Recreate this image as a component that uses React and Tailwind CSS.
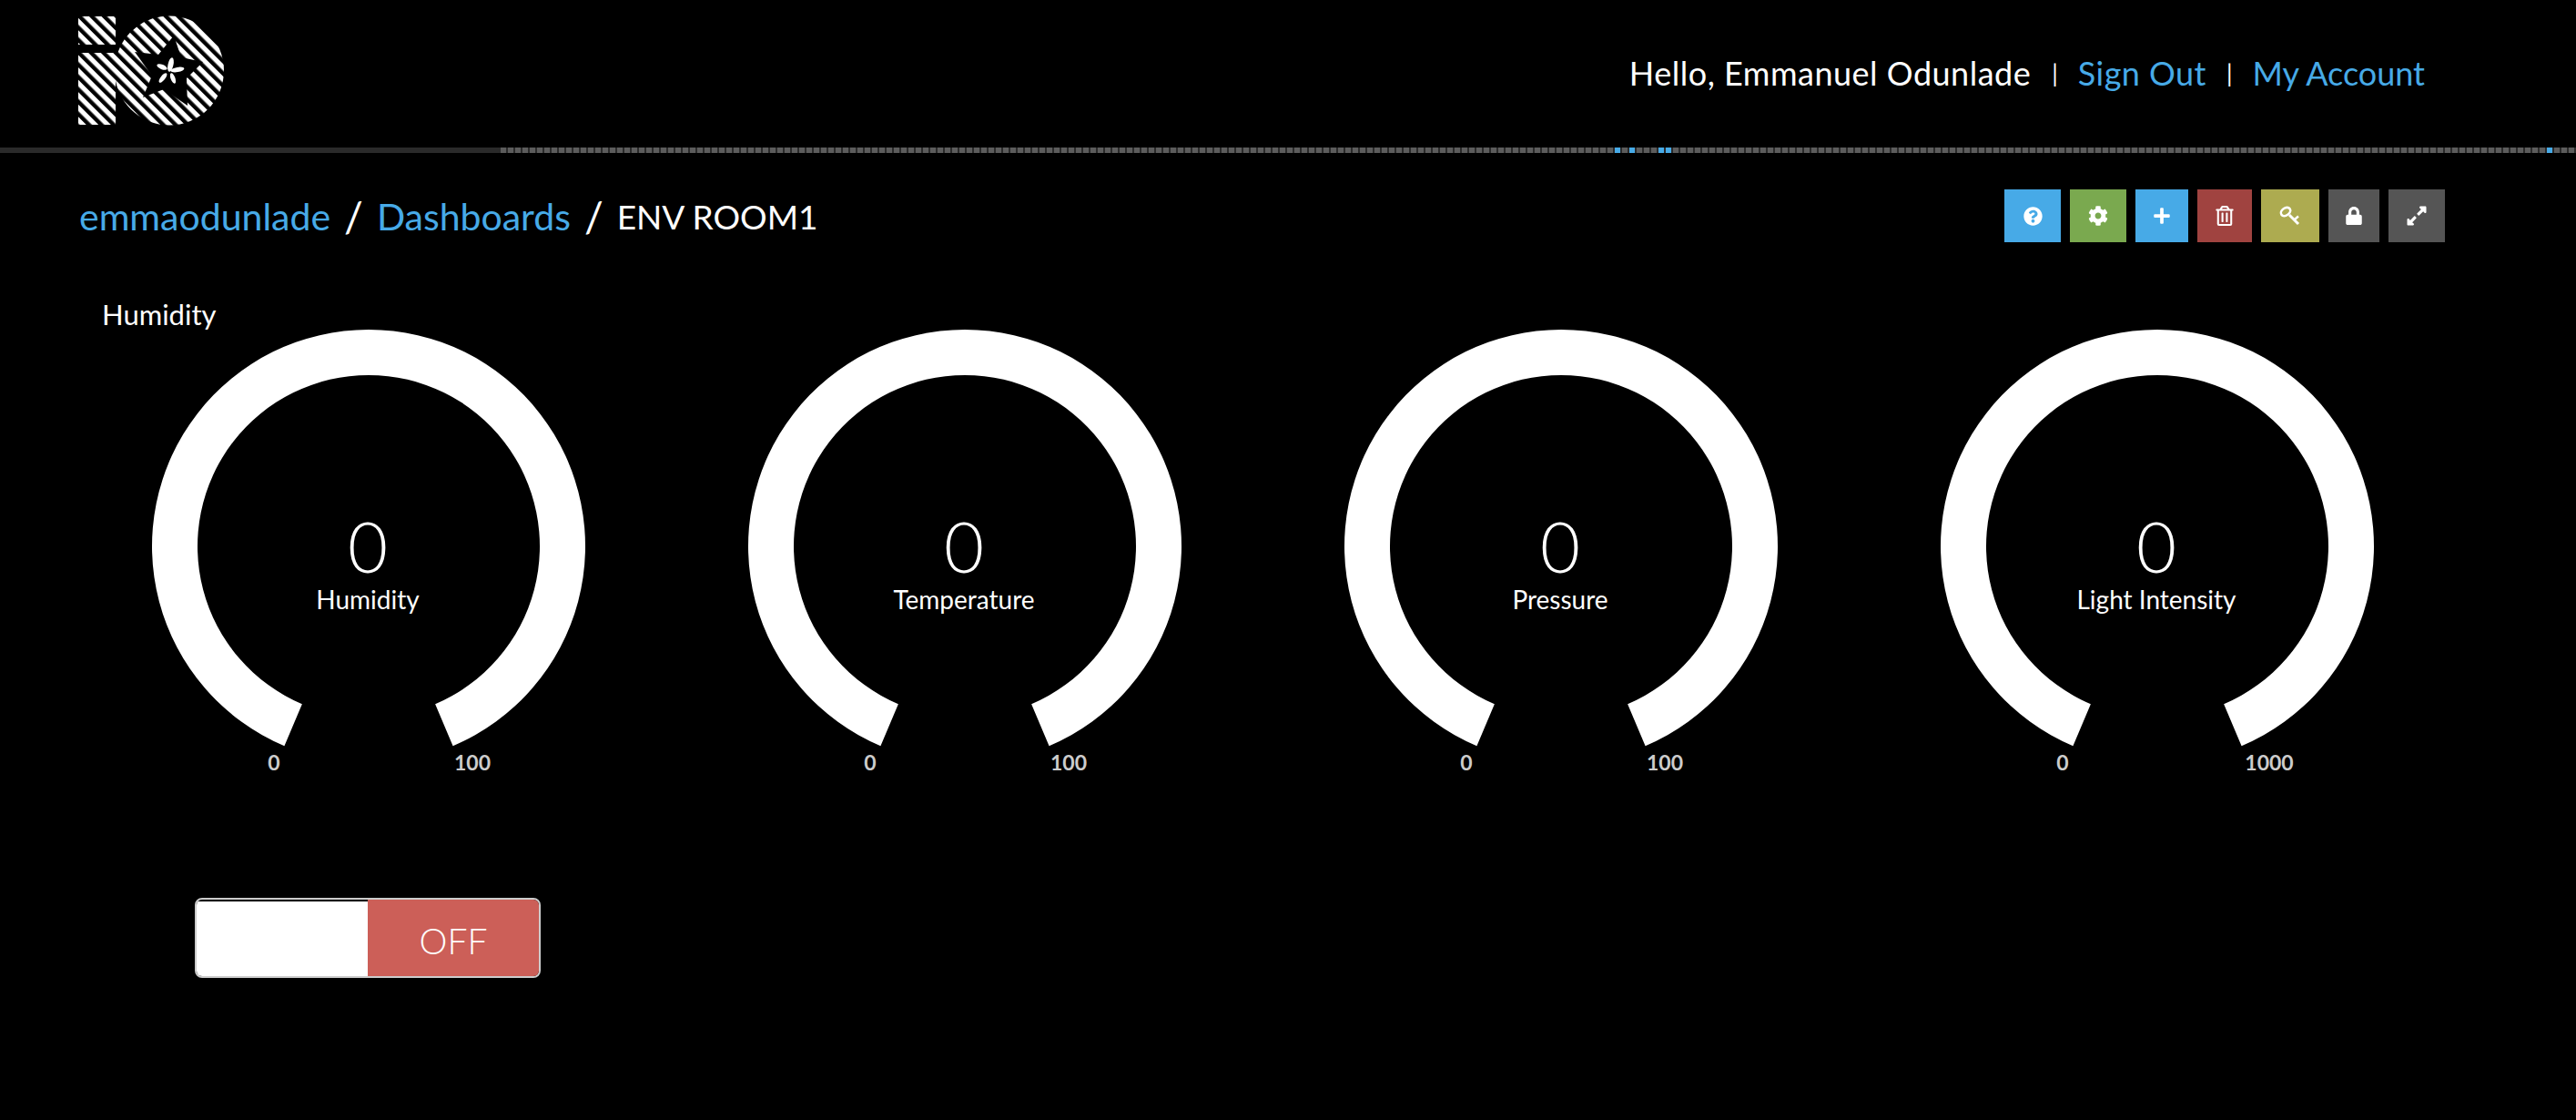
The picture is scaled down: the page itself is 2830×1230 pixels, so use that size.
import React from 'react';
import { FaQuestionCircle, FaCog, FaPlus, FaRegTrashAlt, FaLock, FaExpandAlt } from 'react-icons/fa';

const FONT = "font-['Lato','Open_Sans',sans-serif]";

const gauges = [
  { title: 'Humidity', label: 'Humidity', max: '100', maxX: 114, showTitle: true },
  { title: 'Temperature', label: 'Temperature', max: '100', maxX: 114 },
  { title: 'Pressure', label: 'Pressure', max: '100', maxX: 114 },
  { title: 'Light Intensity', label: 'Light Intensity', max: '1000', maxX: 123 },
];

const blueCells = [153, 155, 159, 160, 281];
const cells = Array.from({ length: 285 }, (_, i) => i);

const arcPath = (cx, cy) => {
  const sin = 0.389;
  const cos = 0.921;
  const R = 238;
  const r = 188;
  return [
    `M ${cx - R * sin} ${cy + R * cos}`,
    `A ${R} ${R} 0 1 1 ${cx + R * sin} ${cy + R * cos}`,
    `L ${cx + r * sin} ${cy + r * cos}`,
    `A ${r} ${r} 0 1 0 ${cx - r * sin} ${cy + r * cos}`,
    'Z',
  ].join(' ');
};

const Logo = () => (
  <svg width="162" height="122" viewBox="85 17 162 122" className="block">
    <defs>
      <pattern id="stripes" width="9.6" height="9.6" patternUnits="userSpaceOnUse" patternTransform="rotate(45 86 18)">
        <rect width="9.6" height="5.2" x="0" y="0" fill="#fff" />
      </pattern>
      <clipPath id="ioShape">
        <rect x="86" y="18" width="41" height="31" />
        <rect x="86" y="58" width="41" height="79" />
        <rect x="127" y="58" width="12" height="24" />
        <circle cx="186" cy="77.5" r="60" />
      </clipPath>
    </defs>
    <rect x="85" y="17" width="162" height="122" fill="url(#stripes)" clipPath="url(#ioShape)" />
    <polygon points="191,39 199,63 223,68 205,86 206,116 180,98 157,107 167,83 148,57 174,60" fill="#000" />
    <g fill="#fff">
      <ellipse cx="187.5" cy="71" rx="3" ry="8" transform="rotate(12 187.5 71)" />
      <ellipse cx="195" cy="76.5" rx="7.5" ry="2.6" transform="rotate(-10 195 76.5)" />
      <ellipse cx="190" cy="86" rx="2.5" ry="6" transform="rotate(-20 190 86)" />
      <ellipse cx="179" cy="85.5" rx="2.5" ry="6.5" transform="rotate(38 179 85.5)" />
      <ellipse cx="178" cy="73.5" rx="6" ry="2.6" transform="rotate(22 178 73.5)" />
    </g>
  </svg>
);

const KeyIcon = () => (
  <svg width="24" height="24" viewBox="0 0 24 24" fill="none" stroke="#fff">
    <ellipse cx="7" cy="7.5" rx="5.6" ry="4" strokeWidth="2.6" transform="rotate(-35 7 7.5)" />
    <path d="M11 11 L21 21" strokeWidth="3" />
    <path d="M17 16 L21 12.5" strokeWidth="2.4" />
  </svg>
);

const toolbar = [
  { w: 'w-[62px]', bg: 'bg-[#47aae7]', icon: <FaQuestionCircle size={21} /> },
  { w: 'w-[62px]', bg: 'bg-[#7aa94f]', icon: <FaCog size={22} /> },
  { w: 'w-[58px]', bg: 'bg-[#47aae7]', icon: <FaPlus size={20} /> },
  { w: 'w-[60px]', bg: 'bg-[#a04340]', icon: <FaRegTrashAlt size={22} /> },
  { w: 'w-[64px]', bg: 'bg-[#adab50]', icon: <KeyIcon /> },
  { w: 'w-[56px]', bg: 'bg-[#555555]', icon: <FaLock size={20} /> },
  { w: 'w-[62px]', bg: 'bg-[#555555]', icon: <FaExpandAlt size={24} /> },
];

const Gauge = ({ gauge }) => (
  <div className="relative w-[655px] h-[540px]">
    {gauge.showTitle && (
      <div className="absolute left-[35px] top-0 text-[31px] leading-[30px] text-white">{gauge.title}</div>
    )}
    <svg width="655" height="540" viewBox="0 0 655 540" className="block">
      <path d={arcPath(328, 270)} fill="#fff" />
      <text x="327" y="299" textAnchor="middle" fill="#fff" fontSize="76" fontWeight="300">0</text>
      <text x="327" y="339" textAnchor="middle" fill="#fff" fontSize="28">{gauge.label}</text>
      <text x="224" y="516" textAnchor="middle" fill="#cccccc" fontSize="23" fontWeight="700">0</text>
      <text x={328 + gauge.maxX} y="516" textAnchor="middle" fill="#cccccc" fontSize="23" fontWeight="700">{gauge.max}</text>
    </svg>
  </div>
);

const App = () => {
  return (
    <div className={`w-full h-[1230px] bg-black overflow-hidden text-white ${FONT}`}>
      <header className="h-[162px] flex justify-between pl-[85px] pr-[166px]">
        <div className="pt-[17px]">
          <Logo />
        </div>
        <nav className="flex items-center h-[160px] text-[36px] gap-[22px]">
          <span className="tracking-[0.5px] mr-[1px]">Hello, Emmanuel Odunlade</span>
          <span className="text-[26px]">|</span>
          <a className="text-[#47aae7] tracking-[0.45px]">Sign Out</a>
          <span className="text-[26px]">|</span>
          <a className="text-[#47aae7]">My Account</a>
        </nav>
      </header>

      <div className="h-[6px] flex bg-[#2a2a2a]">
        <div className="w-[550px] shrink-0" />
        {cells.map((i) => (
          <div key={i} className="w-[8px] shrink-0 pr-[2px]">
            <div className={blueCells.includes(i) ? 'h-full bg-[#47aae7]' : 'h-full bg-[#5c5c5c]'} />
          </div>
        ))}
      </div>

      <div className="flex justify-between pl-[87px] pr-[144px] pt-[40px]">
        <div className="flex items-center h-[58px] text-[41px] gap-[15px] pt-[2px]">
          <a className="text-[#47aae7]">emmaodunlade</a>
          <span className="text-[46px] leading-none">/</span>
          <a className="text-[#47aae7]">Dashboards</a>
          <span className="text-[46px] leading-none">/</span>
          <span className="text-[37px]">ENV ROOM1</span>
        </div>
        <div className="flex gap-[10px]">
          {toolbar.map((b, i) => (
            <button key={i} className={`${b.w} h-[58px] ${b.bg} flex items-center justify-center text-white`}>
              {b.icon}
            </button>
          ))}
        </div>
      </div>

      <div className="flex pl-[77px] mt-[64px]">
        {gauges.map((g) => (
          <Gauge key={g.label} gauge={g} />
        ))}
      </div>

      <div className="ml-[214px] mt-[116px] w-[380px] h-[88px] flex border-2 border-[#cccccc] rounded-[8px] overflow-hidden">
        <div className="w-[188px] bg-white border-t-[2px] border-black" />
        <div className="w-[188px] bg-[#cc5f58] flex items-center justify-center text-[39px] font-light pt-[6px]">OFF</div>
      </div>
    </div>
  );
};

export default App;
